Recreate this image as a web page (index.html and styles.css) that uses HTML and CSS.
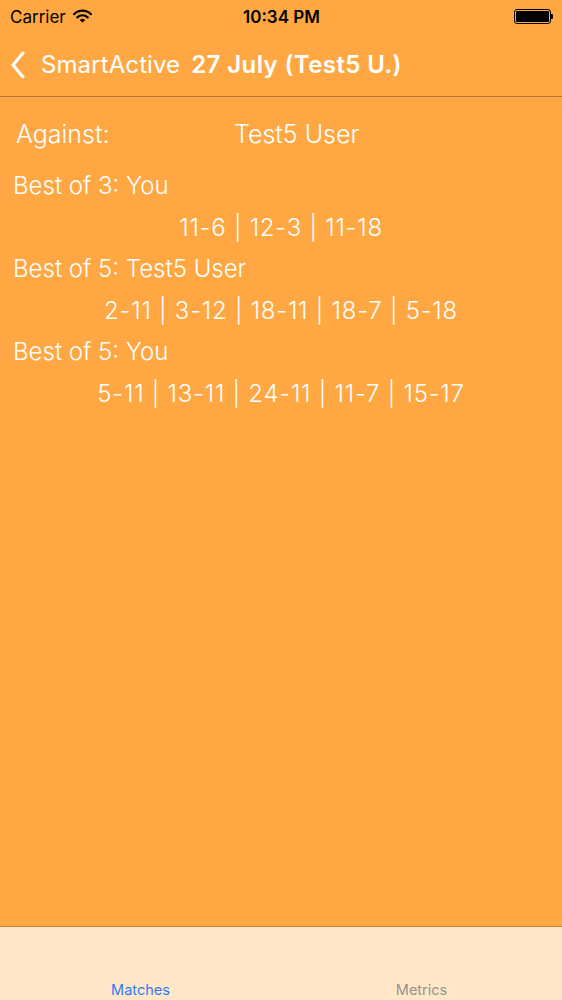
FILE: index.html
```html
<!DOCTYPE html>
<html>
<head>
<meta charset="utf-8">
<link rel="stylesheet" href="styles.css">
</head>
<body>
<div class="screen">
  <div class="status">
    <div class="status-left">
      <span class="carrier">Carrier</span>
      <svg class="wifi" width="19" height="14" viewBox="0 0 19 14">
        <path d="M1 5.2 A12 12 0 0 1 18 5.2" fill="none" stroke="#000" stroke-width="2.2" stroke-linecap="round"/>
        <path d="M4.3 8.4 A7.4 7.4 0 0 1 14.7 8.4" fill="none" stroke="#000" stroke-width="2.2" stroke-linecap="round"/>
        <path d="M6.8 11 L9.5 13.6 L12.2 11 A3.8 3.8 0 0 0 6.8 11 Z" fill="#000"/>
      </svg>
    </div>
    <div class="time">10:34 PM</div>
    <div class="status-right">
      <div class="battery"><div class="battery-fill"></div></div>
      <div class="battery-tip"></div>
    </div>
  </div>
  <div class="nav">
    <svg class="chev" width="14" height="28" viewBox="0 0 14 28">
      <path d="M12 2 L2 14 L12 26" fill="none" stroke="#fff" stroke-width="3" stroke-linecap="round" stroke-linejoin="round"/>
    </svg>
    <span class="back">SmartActive</span>
    <span class="title">27 July (Test5 U.)</span>
  </div>
  <div class="content">
    <div class="against">
      <span class="against-label">Against:</span>
      <span class="against-name">Test5 User</span>
    </div>
    <div class="line">Best of 3: You</div>
    <div class="line center">11-6 | 12-3 | 11-18</div>
    <div class="line">Best of 5: Test5 User</div>
    <div class="line center">2-11 | 3-12 | 18-11 | 18-7 | 5-18</div>
    <div class="line">Best of 5: You</div>
    <div class="line center">5-11 | 13-11 | 24-11 | 11-7 | 15-17</div>
  </div>
  <div class="tabbar">
    <div class="tab active">Matches</div>
    <div class="tab">Metrics</div>
  </div>
</div>
</body>
</html>
```
FILE: styles.css
```css
html, body {
  margin: 0;
  padding: 0;
}
body {
  font-family: Inter, Roboto, "Liberation Sans", sans-serif;
  background: #FFA843;
}
.screen {
  width: 562px;
  height: 1000px;
  display: flex;
  flex-direction: column;
  background: #FFA843;
  color: #fff;
}
.status {
  height: 33px;
  display: flex;
  align-items: center;
  justify-content: space-between;
  padding: 0 9px 0 10px;
  color: #000;
}
.status-left {
  display: flex;
  align-items: center;
  gap: 7px;
  width: 120px;
}
.carrier {
  font-size: 17px;
}
.wifi {
  margin-top: -1px;
}
.time {
  font-size: 17px;
  font-weight: 600;
}
.status-right {
  width: 120px;
  display: flex;
  justify-content: flex-end;
  align-items: center;
}
.battery {
  width: 33px;
  height: 11px;
  border: 1px solid #000;
  border-radius: 3px;
  padding: 1px;
  box-sizing: content-box;
}
.battery-fill {
  width: 100%;
  height: 100%;
  background: #000;
  border-radius: 1px;
}
.battery-tip {
  width: 2px;
  height: 5px;
  background: #000;
  border-radius: 0 1px 1px 0;
}
.nav {
  height: 64px;
  display: flex;
  align-items: center;
  padding-left: 11px;
  border-bottom: 1px solid #B87934;
  box-sizing: border-box;
}
.chev {
  margin-right: 16px;
}
.back {
  font-size: 24px;
  font-weight: 400;
  margin-right: 11px;
  letter-spacing: 0.1px;
}
.title {
  font-size: 24px;
  font-weight: 600;
  letter-spacing: 0.4px;
}
.content {
  flex: 1;
  padding: 15px 0 0 13px;
}
.against {
  display: flex;
  font-size: 25px;
  font-weight: 300;
  height: 53px;
  line-height: 44px;
  padding-left: 3px;
}
.against-label {
  width: 218px;
}
.line {
  font-size: 24px;
  font-weight: 300;
  height: 41.5px;
  line-height: 41.5px;
}
.center {
  text-align: center;
  margin-left: -13px;
  letter-spacing: 0.75px;
}
.tabbar {
  height: 73px;
  background: #FFE7C7;
  border-top: 1px solid #C8823A;
  display: flex;
  align-items: flex-end;
}
.tab {
  flex: 1;
  text-align: center;
  font-size: 14.5px;
  color: #929292;
  padding-bottom: 2px;
}
.tab.active {
  color: #2F7DF6;
}
```
